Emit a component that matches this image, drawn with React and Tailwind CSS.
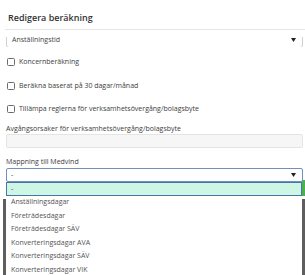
import React from 'react';

const font = { fontFamily: '"Open Sans", "Liberation Sans", sans-serif' };

const Caret = () => (
    <svg width="5" height="4" viewBox="0 0 5 4" className="shrink-0">
        <path d="M0 0 L5 0 L2.5 4 Z" fill="#222" />
    </svg>
);

const Check = ({ label, className = '' }) => (
    <label className={`flex items-center h-[10px] ${className}`}>
        <span className="w-[8px] h-[8px] ml-[1px] border border-[#6b6b6b] rounded-[1.5px] bg-white shrink-0" />
        <span className="ml-[4px] text-[7px] leading-[10px] text-[#3d3d3d]">{label}</span>
    </label>
);

const options = [
    'Anställningsdagar',
    'Företrädesdagar',
    'Företrädesdagar SÄV',
    'Konverteringsdagar AVA',
    'Konverteringsdagar SÄV',
    'Konverteringsdagar VIK',
];

export default function App() {
    return (
        <div className="w-[305px] h-[275px] overflow-hidden bg-white" style={font}>
            {/* Header */}
            <div className="ml-[5px] pl-[3px] pt-[12px] pb-[6px] border-b border-[#e6e6e6]">
                <h2 className="text-[9px] leading-[11px] font-semibold text-[#333]">Redigera beräkning</h2>
            </div>

            {/* Scroll area */}
            <div className="mt-[7px] px-[6px] pr-[2px] h-[238px]">
                <div className="h-[10px] overflow-hidden">
                    <div className="-mt-[7px] h-[18px] flex items-center justify-between pl-[5px] pr-[6px] pt-[2px] border border-[#cfcfcf] rounded-[3px] text-[7px] text-[#444]">
                        <span>Anställningstid</span>
                        <Caret />
                    </div>
                </div>

                <Check label="Koncernberäkning" className="mt-[10px]" />
                <Check label="Beräkna baserat på 30 dagar/månad" className="mt-[14px]" />
                <Check label="Tillämpa reglerna för verksamhetsövergång/bolagsbyte" className="mt-[13px]" />

                <div className="mt-[10px] text-[7px] leading-[10px] text-[#3d3d3d]">Avgångsorsaker för verksamhetsövergång/bolagsbyte</div>
                <div className="h-[14px] border border-[#e4e4e4] rounded-[2px] bg-[#f6f6f6]" />

                <div className="mt-[9px] text-[7px] leading-[10px] text-[#3d3d3d]">Mappning till Medvind</div>
                <div className="relative mt-[1px]">
                    <div className="h-[14px] flex items-center justify-between pl-[4px] pr-[6px] border border-[#6f92bd] rounded-[2px] text-[7px] text-[#333]">
                        <span>-</span>
                        <Caret />
                    </div>

                    {/* Dropdown list */}
                    <div className="absolute left-0 right-[1px] top-full z-10 bg-white">
                        <div className="h-[13.5px] flex items-center pl-[4px] border border-[#4a74a6] bg-[#cdf7e4] text-[7px] text-[#333]">-</div>
                        {options.map(o => (
                            <div key={o} className="h-[13.6px] flex items-center pl-[5px] text-[7px] text-[#555]">{o}</div>
                        ))}
                    </div>
                </div>

                {/* Content behind dropdown */}
                <div className="-ml-[3px] -mr-[2px]">
                    <div className="h-[16px] mt-[-2px] border-r-[3px] border-[#4caf50]" />
                    <div className="mt-[3px] h-[80px] border-l-[3px] border-r-[3px] border-[#5e5e5e]" />
                </div>
            </div>
        </div>
    );
}
